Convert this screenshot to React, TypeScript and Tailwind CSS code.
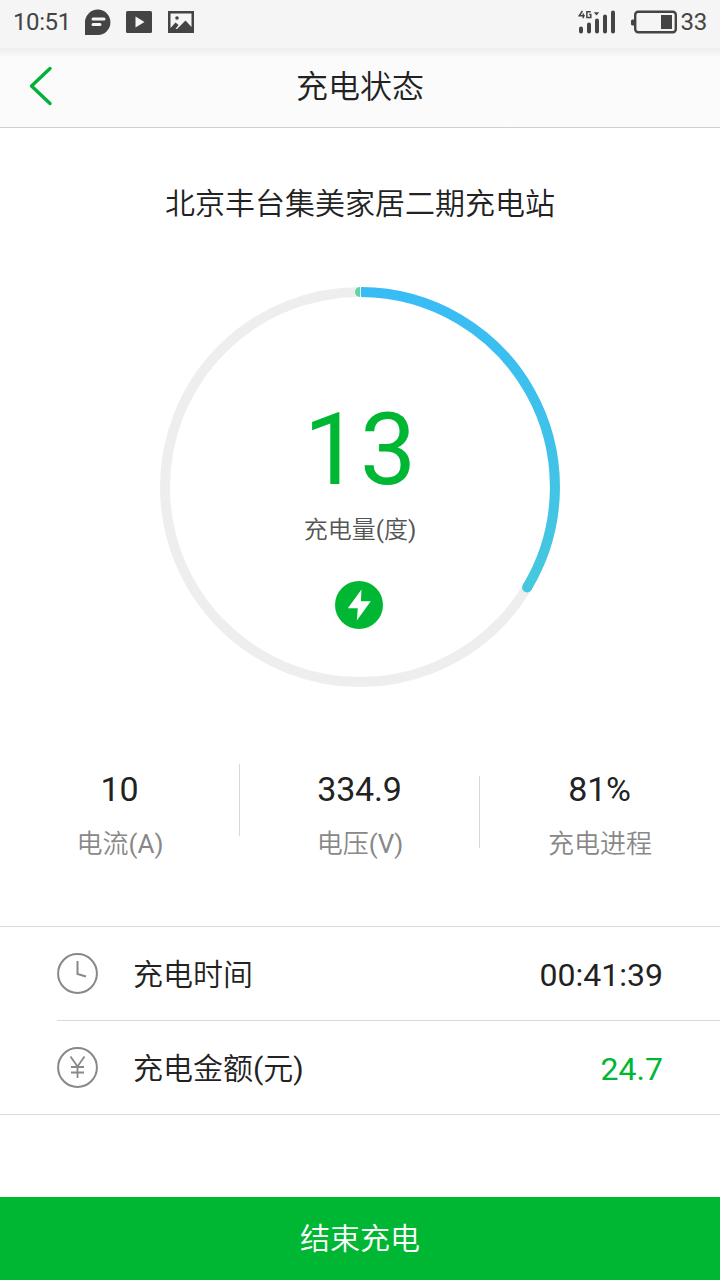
import type { ReactNode } from 'react';

type Metric = {
  value: string;
  label: string;
  divider?: string;
};

type DetailRow = {
  icon: ReactNode;
  label: string;
  value: string;
  valueClass: string;
};

const metrics: Metric[] = [
  { value: '10', label: '电流(A)' },
  { value: '334.9', label: '电压(V)', divider: 'mt-0' },
  { value: '81%', label: '充电进程', divider: 'mt-3' },
];

// Chinese glyphs use the DemiLight weight, Latin characters stay regular
function MixedText({ children }: { children: string }) {
  return (
    <>
      {children.split(/([\x20-\x7e]+)/).map((part, i) =>
        i % 2 ? (
          <span key={i} className="font-normal">
            {part}
          </span>
        ) : (
          part
        )
      )}
    </>
  );
}

function StatusBar() {
  return (
    <div className="flex h-12 items-center justify-between bg-[#f5f5f5] pb-1 pr-[13px] pl-[13px] text-[24px] leading-none font-normal text-[#444]">
      <div className="flex items-center">
        <span className="w-[72px] tracking-[-0.4px]">10:51</span>
        <svg width="26" height="26" viewBox="0 0 26 26">
          <path d="M0 26V13a12.7 12.7 0 1 1 13 13z" fill="#444" />
          <path d="M8 10h11M8 15.5h7" stroke="#f5f5f5" strokeWidth="3" strokeLinecap="round" />
        </svg>
        <svg className="ml-[15px]" width="26" height="22" viewBox="0 0 26 22">
          <rect width="26" height="22" rx="1.5" fill="#444" />
          <path d="M9.5 5.5v11l9-5.5z" fill="#f5f5f5" />
        </svg>
        <svg className="ml-4" width="26" height="22" viewBox="0 0 26 22">
          <path
            d="M0 0h26v22H0zM2.5 2.5v14.5l5-5.5 3 2.5-3 4h1.5l8.5-8.5 6 6.5V2.5z"
            fill="#444"
            fillRule="evenodd"
          />
          <circle cx="9" cy="7" r="1.8" fill="#444" />
        </svg>
      </div>
      <div className="flex items-center">
        <svg width="38" height="26" viewBox="0 0 38 26">
          <path
            d="M4.4 2 1.2 6.8h5.6M5.3 4.5v4.7M12.8 2.8H8.9v5.6h3.9V5.6h-1.6"
            fill="none"
            stroke="#444"
            strokeWidth="1.5"
          />
          <path d="M15.8 3.3h5.4l-2.7 3.2z" fill="#444" />
          <path
            d="M3 19.5v3M11 15.5v7M19 11.5v11M27 7.5v15M35 3.5v19"
            stroke="#444"
            strokeWidth="4"
            strokeLinecap="round"
          />
        </svg>
        <svg className="ml-[15px]" width="47" height="24" viewBox="0 0 47 24">
          <rect x="4.2" y="1.7" width="40.6" height="20.6" rx="3" fill="none" stroke="#444" strokeWidth="2.4" />
          <rect x="0" y="9.5" width="4" height="6" rx="1.5" fill="#444" />
          <rect x="30" y="5" width="11" height="14" fill="#444" />
        </svg>
        <span className="ml-[3px] tracking-[-0.3px]">33</span>
      </div>
    </div>
  );
}

function Header() {
  return (
    <header className="relative flex h-20 items-center justify-center border-b border-[#cfcfcf] bg-gradient-to-b from-[#eeeeee] via-[#fbfbfb] via-[12%] to-[#fbfbfb]">
      <svg className="absolute top-[18px] left-[29px]" width="24" height="40" viewBox="0 0 24 40">
        <path
          d="M21 2.5 2.5 20 21 37.5"
          fill="none"
          stroke="#04b038"
          strokeWidth="3.4"
          strokeLinecap="round"
          strokeLinejoin="round"
        />
      </svg>
      <h1 className="pb-px text-[32px] leading-[48px] text-[#222]">充电状态</h1>
    </header>
  );
}

function ChargeRing() {
  return (
    <div className="relative mx-auto mt-[59px] size-[400px]">
      <svg className="absolute inset-0" width="400" height="400" viewBox="0 0 400 400">
        <defs>
          <linearGradient id="ring" x1="0" y1="0" x2="0" y2="1">
            <stop offset="0" stopColor="#38bcf5" />
            <stop offset="1" stopColor="#46c8dd" />
          </linearGradient>
        </defs>
        <circle cx="200" cy="200" r="195" fill="none" stroke="#eeeeee" strokeWidth="10" />
        <path d="M200 0a5 5 0 0 0 0 10z" fill="#5cd6a4" />
        <path d="M200 0h1v10h-1z" fill="#fff" />
        <path d="M201 5A195 195 0 0 1 367.1 300.4" fill="none" stroke="url(#ring)" strokeWidth="10" />
        <circle cx="367.1" cy="300.4" r="5" fill="#45c7df" />
      </svg>
      <div className="relative flex flex-col items-center pt-[104px]">
        <span className="text-[100px] leading-[117px] font-normal text-[#00b733]">13</span>
        <span className="mt-[4px] text-[24px] leading-9 text-[#555]">
          <MixedText>充电量(度)</MixedText>
        </span>
        <svg className="mt-[33px] mr-[2px]" width="48" height="48" viewBox="0 0 48 48">
          <circle cx="24" cy="24" r="24" fill="#00b733" />
          <path d="M26.5 8.5 12.8 27.3h10L21.8 39.5 35.8 20.3H25.9z" fill="#fff" />
        </svg>
      </div>
    </div>
  );
}

function ClockIcon() {
  return (
    <svg width="42" height="42" viewBox="0 0 42 42" fill="none" stroke="#888" strokeWidth="2">
      <circle cx="20.5" cy="20.5" r="19.4" />
      <path d="M20.5 8v13l8.5 2.5" />
    </svg>
  );
}

function YuanIcon() {
  return (
    <svg width="42" height="42" viewBox="0 0 42 42" fill="none" stroke="#888" strokeWidth="1.8">
      <circle cx="20.5" cy="20.5" r="19.4" strokeWidth="2" />
      <path d="m13.5 9.5 7 10 7-10M20.5 19.5V31M14 20h13M14 25.5h13" />
    </svg>
  );
}

const rows: DetailRow[] = [
  { icon: <ClockIcon />, label: '充电时间', value: '00:41:39', valueClass: 'text-[#222]' },
  { icon: <YuanIcon />, label: '充电金额(元)', value: '24.7', valueClass: 'text-[#00b733]' },
];

export default function App() {
  return (
    <div className="flex h-[1280px] w-[720px] flex-col overflow-hidden bg-white font-['Roboto','Noto_Sans_CJK_SC',sans-serif] font-[350]">
      <StatusBar />
      <Header />

      <main className="flex-1">
        <h2 className="mt-[52px] text-center text-[30px] leading-[48px] text-[#222]">
          北京丰台集美家居二期充电站
        </h2>

        <ChargeRing />

        {/* Live readings */}
        <div className="mt-[77px] grid h-[162px] grid-cols-3">
          {metrics.map((m) => (
            <div key={m.label} className="relative text-center">
              {m.divider && (
                <span className={`absolute top-0 -left-px h-[72px] w-px bg-[#d8d8d8] ${m.divider}`} />
              )}
              <div className="pt-[5px] pr-px text-[34px] leading-10 font-normal tracking-[-0.2px] text-[#222]">
                {m.value}
              </div>
              <div className="mt-[15px] text-[26px] leading-10 text-[#888]">
                <MixedText>{m.label}</MixedText>
              </div>
            </div>
          ))}
        </div>

        {/* Session details */}
        <div className="border-y border-[#dadada]">
          {rows.map((row, i) => (
            <div
              key={row.label}
              className={`ml-[57px] flex h-[93px] items-center pr-[57px] ${i > 0 ? 'h-[94px] border-t border-[#dadada]' : ''}`}
            >
              {row.icon}
              <span className="ml-[34px] flex-1 pt-[3px] text-[30px] leading-[48px] text-[#222]">
                <MixedText>{row.label}</MixedText>
              </span>
              <span className={`pt-0.5 text-[32px] leading-[48px] font-normal ${row.valueClass}`}>{row.value}</span>
            </div>
          ))}
        </div>
      </main>

      <button className="h-[83px] w-full bg-[#00b733] pt-px text-[30px] leading-[48px] text-white">结束充电</button>
    </div>
  );
}
